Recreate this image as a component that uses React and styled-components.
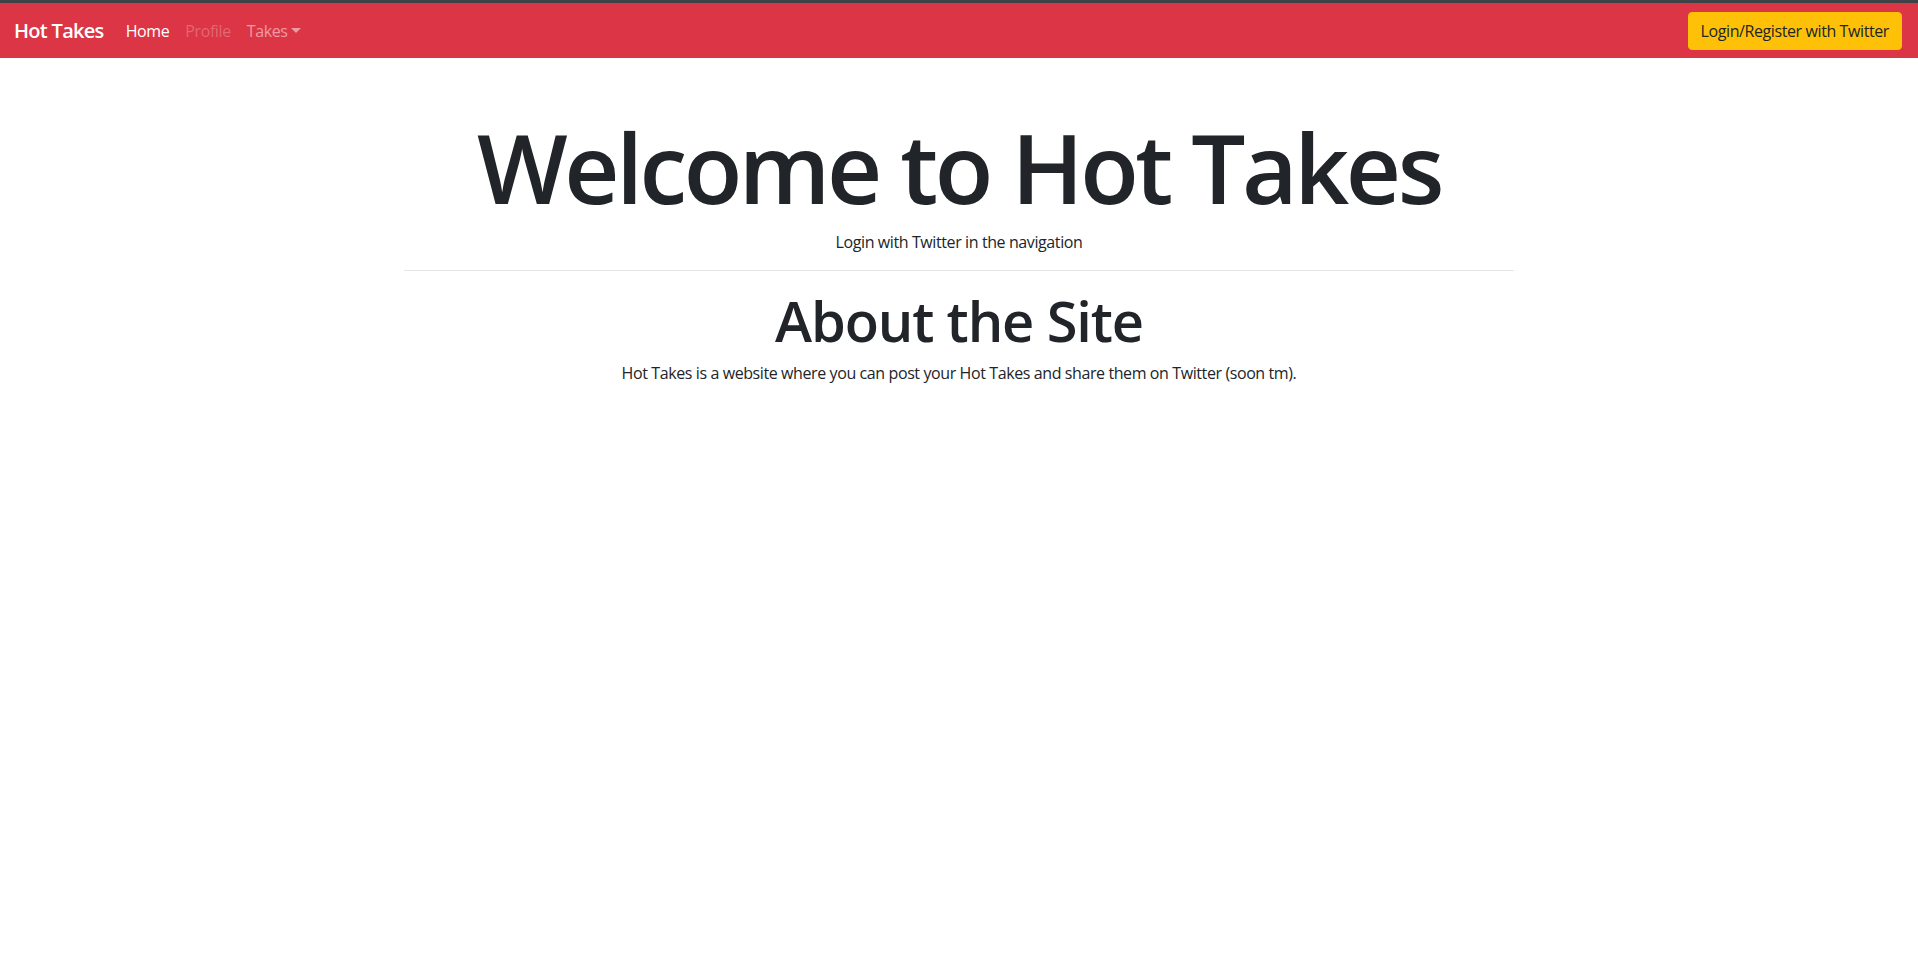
import React from "react";
import styled, { createGlobalStyle } from "styled-components";

const GlobalStyle = createGlobalStyle`
  *, *::before, *::after {
    box-sizing: border-box;
  }
  body {
    margin: 0;
    font-family: "Open Sans", "Noto Sans", Arial, sans-serif;
    font-size: 16px;
    line-height: 1.5;
    letter-spacing: -0.025em;
    color: #212529;
    background: #fff;
  }
`;

const Navbar = styled.nav`
  display: flex;
  align-items: center;
  justify-content: space-between;
  height: 58px;
  padding: 0 16px 0 14px;
  background-color: #dc3545;
  border-top: 3px solid #3f4347;
`;

const NavLeft = styled.div`
  display: flex;
  align-items: center;
`;

const Brand = styled.a`
  font-size: 20px;
  font-weight: 600;
  letter-spacing: -0.035em;
  color: #fff;
  text-decoration: none;
  margin-right: 14px;
`;

const NavLink = styled.a`
  font-size: 16px;
  color: ${(p) =>
    p.$active ? "#fff" : p.$disabled ? "rgba(255,255,255,.25)" : "rgba(255,255,255,.5)"};
  text-decoration: none;
  padding: 8px;

  &.dropdown::after {
    display: inline-block;
    margin-left: 4px;
    vertical-align: 4px;
    content: "";
    border-top: 5px solid;
    border-right: 5px solid transparent;
    border-left: 5px solid transparent;
  }
`;

const LoginButton = styled.button`
  font-family: inherit;
  font-size: 16px;
  line-height: 1.5;
  letter-spacing: -0.025em;
  color: #212529;
  background-color: #ffc107;
  border: 1px solid #ffc107;
  border-radius: 4px;
  padding: 6px 12px;
  cursor: pointer;
`;

const Container = styled.main`
  width: 1110px;
  margin: 0 auto;
  text-align: center;
`;

const Title = styled.h1`
  font-size: 96px;
  font-weight: 600;
  letter-spacing: -0.036em;
  line-height: 1.2;
  margin: 51px 0 6px;
`;

const Heading = styled.h2`
  font-size: 56px;
  font-weight: 600;
  letter-spacing: -0.02em;
  line-height: 1.2;
  margin: 0 0 7px;
`;

const Lead = styled.p`
  margin: 0;
`;

const Divider = styled.hr`
  margin: 16px 0;
  border: 0;
  border-top: 1px solid rgba(0, 0, 0, 0.1);
`;

export default function App() {
  return (
    <>
      <GlobalStyle />
      <Navbar>
        <NavLeft>
          <Brand href="#">Hot Takes</Brand>
          <NavLink href="#" $active>
            Home
          </NavLink>
          <NavLink href="#" $disabled>
            Profile
          </NavLink>
          <NavLink href="#" className="dropdown">
            Takes
          </NavLink>
        </NavLeft>
        <LoginButton>Login/Register with Twitter</LoginButton>
      </Navbar>
      <Container>
        <Title>Welcome to Hot Takes</Title>
        <Lead>Login with Twitter in the navigation</Lead>
        <Divider />
        <Heading>About the Site</Heading>
        <Lead>
          Hot Takes is a website where you can post your Hot Takes and share
          them on Twitter (soon tm).
        </Lead>
      </Container>
    </>
  );
}
